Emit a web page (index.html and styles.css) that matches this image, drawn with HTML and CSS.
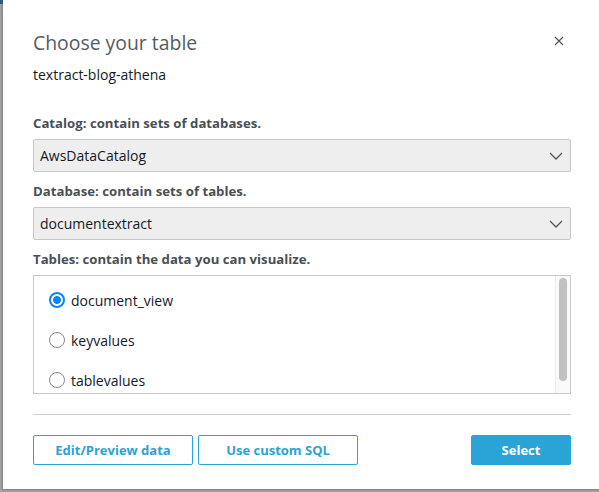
FILE: index.html
```html
<!DOCTYPE html>
<html>
<head>
<meta charset="utf-8">
<link rel="stylesheet" href="styles.css">
</head>
<body>
<div class="topbar"></div>
<div class="dialog">
  <div class="header">
    <h1 class="title">Choose your table</h1>
    <button class="close" aria-label="Close">
      <svg width="10" height="10" viewBox="0 0 10 10"><path d="M1 1L9 9M9 1L1 9" stroke="#555" stroke-width="1.2" fill="none"/></svg>
    </button>
  </div>
  <div class="source">textract-blog-athena</div>

  <div class="field">
    <label class="label">Catalog: contain sets of databases.</label>
    <div class="select">
      <span>AwsDataCatalog</span>
      <svg class="chev" width="14" height="8" viewBox="0 0 14 8"><path d="M1 1L7 7L13 1" stroke="#555" stroke-width="1.3" fill="none"/></svg>
    </div>
  </div>

  <div class="field">
    <label class="label">Database: contain sets of tables.</label>
    <div class="select">
      <span>documentextract</span>
      <svg class="chev" width="14" height="8" viewBox="0 0 14 8"><path d="M1 1L7 7L13 1" stroke="#555" stroke-width="1.3" fill="none"/></svg>
    </div>
  </div>

  <div class="field">
    <label class="label">Tables: contain the data you can visualize.</label>
    <div class="listbox">
      <div class="items">
        <div class="item"><span class="radio checked"></span><span>document_view</span></div>
        <div class="item"><span class="radio"></span><span>keyvalues</span></div>
        <div class="item"><span class="radio"></span><span>tablevalues</span></div>
      </div>
      <div class="scrollbar"><div class="thumb"></div></div>
    </div>
  </div>

  <div class="divider"></div>

  <div class="footer">
    <div class="left">
      <button class="btn outline wide">Edit/Preview data</button>
      <button class="btn outline wide">Use custom SQL</button>
    </div>
    <button class="btn primary">Select</button>
  </div>
</div>
</body>
</html>
```

FILE: styles.css
```css
html, body {
  margin: 0;
  padding: 0;
  width: 599px;
  height: 492px;
  overflow: hidden;
  background: #a4a4a4;
  font-family: "Open Sans", "Liberation Sans", sans-serif;
  position: relative;
}
.topbar {
  position: absolute;
  left: 0;
  top: 0;
  width: 3px;
  height: 4px;
  background: #2b5a7a;
}
.dialog {
  margin-left: 3px;
  width: 598px;
  height: 489px;
  box-sizing: border-box;
  background: #fff;
  padding: 28px 30px 0 30px;
  box-shadow: -1px 1px 2px rgba(0,0,0,0.25);
}
.header {
  display: flex;
  justify-content: space-between;
  align-items: flex-start;
}
.title {
  margin: 0;
  font-size: 19.4px;
  font-weight: 400;
  color: #545b64;
  line-height: 30px;
}
.close {
  border: 0;
  background: none;
  padding: 0;
  margin: 8px 7px 0 0;
  width: 10px;
  height: 10px;
  display: flex;
}
.source {
  margin-top: 7px;
  font-size: 14px;
  color: #16191f;
  line-height: 20px;
}
.field {
  display: flex;
  flex-direction: column;
}
.label {
  font-size: 13.2px;
  font-weight: 700;
  color: #4a4f56;
  line-height: 20px;
  margin-bottom: 6px;
}
.source + .field { margin-top: 28px; }
.field + .field { margin-top: 9px; }
.select {
  height: 33px;
  box-sizing: border-box;
  background: #eeeeee;
  border: 1px solid #c8c8c8;
  border-radius: 2px;
  display: flex;
  align-items: center;
  justify-content: space-between;
  padding: 0 7px 0 6px;
  font-size: 14px;
  color: #16191f;
}
.listbox {
  height: 119px;
  box-sizing: border-box;
  border: 1px solid #c8c8c8;
  display: flex;
}
.items {
  flex: 1;
  padding: 4px 0 0 15px;
  display: flex;
  flex-direction: column;
}
.item {
  display: flex;
  align-items: center;
  height: 40px;
  flex: none;
  font-size: 14px;
  color: #16191f;
}
.radio {
  width: 16px;
  height: 16px;
  box-sizing: border-box;
  border: 1.5px solid #8c8c8c;
  border-radius: 50%;
  margin-right: 6px;
  background: #fff;
}
.radio.checked {
  border: 2px solid #0a84ff;
  background: radial-gradient(circle, #0a84ff 0 3.6px, #fff 4.2px);
}
.scrollbar {
  width: 15px;
  border-left: 1px solid #ececec;
  background: #fafafa;
  padding: 2px 3px 0 3px;
  box-sizing: border-box;
}
.thumb {
  width: 8px;
  height: 103px;
  border-radius: 4px;
  background: #c1c1c1;
}
.divider {
  margin-top: 20px;
  height: 1px;
  background: #d0d0d0;
}
.footer {
  margin-top: 20px;
  display: flex;
  justify-content: space-between;
}
.left {
  display: flex;
  gap: 5px;
}
.btn {
  height: 30px;
  box-sizing: border-box;
  font-family: inherit;
  font-size: 13px;
  font-weight: 700;
  border-radius: 2px;
  padding: 0;
  cursor: pointer;
}
.btn.outline {
  background: #fff;
  border: 1px solid #2aa3d6;
  color: #2aa3d6;
}
.btn.wide { width: 160px; }
.btn.primary {
  width: 100px;
  background: #2aa3d6;
  border: 1px solid #2aa3d6;
  color: #fff;
}
```
